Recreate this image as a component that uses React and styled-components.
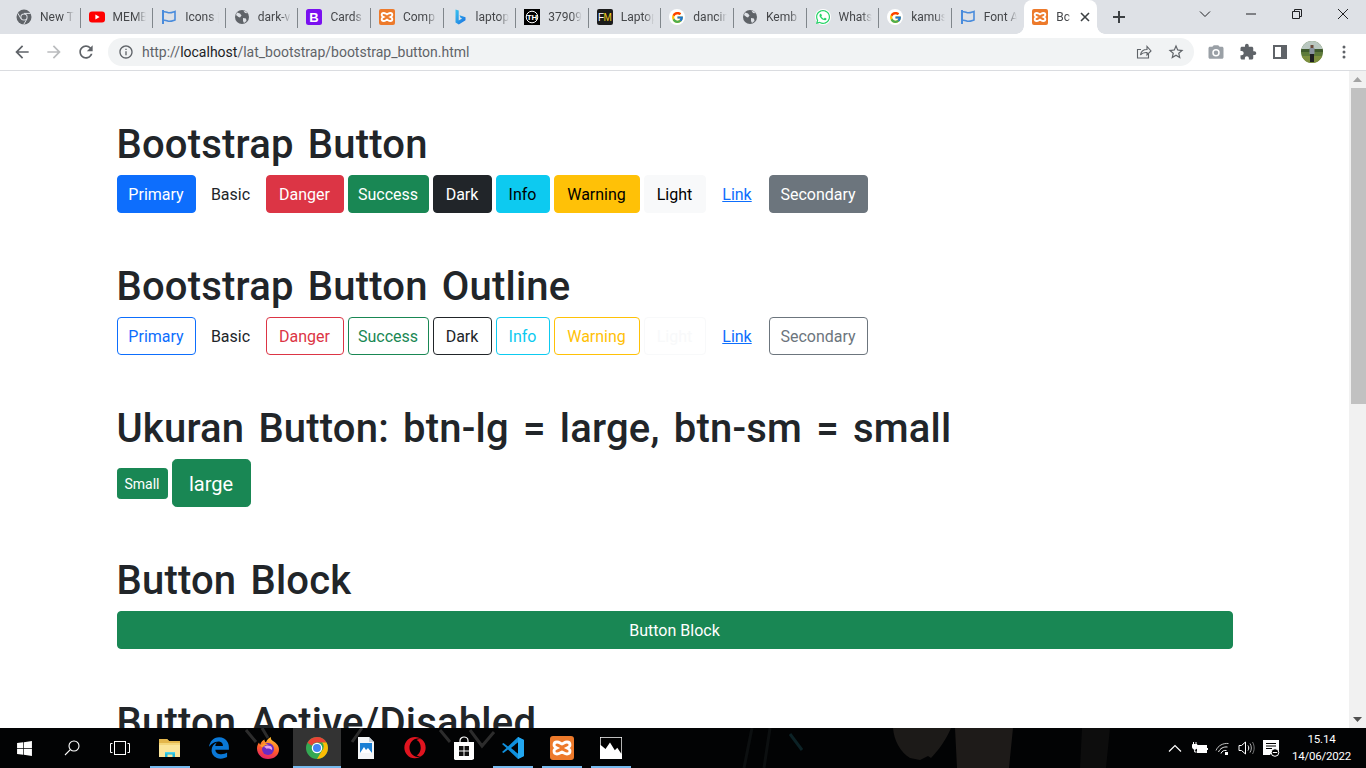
import React from 'react'
import styled, { createGlobalStyle, css } from 'styled-components'
import { FaWhatsapp, FaWindows, FaEdgeLegacy, FaOpera } from 'react-icons/fa'
import { FcGoogle } from 'react-icons/fc'

const Global = createGlobalStyle`
  html, body {
    margin: 0;
    height: 100%;
    overflow: hidden;
    background: #fff;
  }
  * { box-sizing: border-box; }
`

const UI_FONT = 'Roboto, "Noto Sans", sans-serif'

const Shell = styled.div`
  display: flex;
  flex-direction: column;
  height: 768px;
  font-family: ${UI_FONT};
`

/* ---------- tab strip ---------- */

const TabStrip = styled.div`
  display: flex;
  height: 34px;
  padding-left: 8px;
  background: #dee1e6;
  flex: none;
`

const Tab = styled.div`
  position: relative;
  display: flex;
  align-items: center;
  width: 72.6px;
  flex: none;
  padding: 0 7px 0 8px;
  gap: 8px;
  font-size: 12px;
  color: #45474a;

  ${p => p.$sep && css`
    &::after {
      content: '';
      position: absolute;
      right: 0;
      top: 8px;
      height: 20px;
      width: 1px;
      background: #80868b;
    }
  `}

  ${p => p.$active && css`
    width: 73px;
    background: #fff;
    border-radius: 8px 8px 0 0;
    &::before {
      content: '';
      position: absolute;
      left: -8px;
      bottom: 0;
      width: 8px;
      height: 8px;
      background: radial-gradient(circle at 0 0, transparent 7.5px, #fff 8px);
    }
    &::after {
      content: '';
      position: absolute;
      right: -8px;
      bottom: 0;
      width: 8px;
      height: 8px;
      background: radial-gradient(circle at 100% 0, transparent 7.5px, #fff 8px);
    }
  `}
`

const TabTitle = styled.span`
  flex: 1;
  min-width: 0;
  white-space: nowrap;
  -webkit-mask-image: linear-gradient(90deg, #000 70%, transparent);
  mask-image: linear-gradient(90deg, #000 70%, transparent);
`

const Fav = styled.span`
  display: flex;
  width: 16px;
  height: 16px;
  flex: none;
  align-items: center;
  justify-content: center;
`

const NewTab = styled.div`
  display: flex;
  width: 28px;
  height: 28px;
  margin: 3px 0 0 8px;
  align-items: center;
  justify-content: center;
`

const WinControls = styled.div`
  display: flex;
  margin-left: auto;
  height: 28px;
`

const WinBtn = styled.div`
  display: flex;
  width: 46px;
  align-items: center;
  justify-content: center;
`

/* ---------- toolbar ---------- */

const Toolbar = styled.div`
  display: flex;
  align-items: center;
  height: 37px;
  padding: 0 6px 1px;
  background: #fff;
  border-bottom: 1px solid #dadce0;
  flex: none;
`

const ToolBtn = styled.div`
  display: flex;
  width: 32px;
  height: 28px;
  flex: none;
  align-items: center;
  justify-content: center;
`

const Omnibox = styled.div`
  display: flex;
  align-items: center;
  flex: 1;
  height: 28px;
  margin: 0 6px;
  padding: 0 2px 0 8px;
  border-radius: 14px;
  background: #f1f3f4;
`

const InfoWrap = styled.span`
  display: flex;
  width: 20px;
  justify-content: center;
  margin-right: 6px;
`

const Url = styled.div`
  flex: 1;
  font-size: 14px;
  color: #5f6368;
  white-space: nowrap;
  b {
    font-weight: 400;
    color: #202124;
  }
`

/* ---------- page ---------- */

const Viewport = styled.div`
  display: flex;
  flex: 1;
  min-height: 0;
`

const Page = styled.main`
  flex: 1;
  min-width: 0;
  overflow: hidden;
  padding: 48px 116.5px 0;
  font-family: ${UI_FONT};
  color: #212529;
`

const Section = styled.section`
  margin-bottom: 48px;
`

const Heading = styled.h1`
  height: 48px;
  margin: 0 0 8px;
  font-size: 40px;
  line-height: 52px;
  font-weight: 500;
  letter-spacing: 0.2px;
  word-spacing: 4px;
  color: #212529;
  white-space: nowrap;
`

const Row = styled.div`
  display: flex;
  align-items: center;
  gap: 4px;
`

const colors = {
  primary: ['#0d6efd', '#fff'],
  danger: ['#dc3545', '#fff'],
  success: ['#198754', '#fff'],
  dark: ['#212529', '#fff'],
  info: ['#0dcaf0', '#000'],
  warning: ['#ffc107', '#000'],
  light: ['#f8f9fa', '#000'],
  secondary: ['#6c757d', '#fff'],
}

const sizes = {
  sm: css`height: 31px; font-size: 14px; border-radius: 3.2px;`,
  md: css`height: 38px; font-size: 16px; border-radius: 4px;`,
  lg: css`height: 48px; font-size: 20px; border-radius: 4.8px;`,
}

const Btn = styled.button`
  display: flex;
  align-items: center;
  justify-content: center;
  flex: none;
  width: ${p => (p.$block ? '100%' : `${p.$w}px`)};
  padding: 1px 0 0;
  font-family: inherit;
  border: 1px solid transparent;
  background: transparent;
  color: #212529;
  ${p => sizes[p.$size || 'md']}
  ${p => {
    const c = colors[p.$kind]
    if (!c) return ''
    return p.$outline
      ? css`border-color: ${c[0]}; color: ${c[0]};`
      : css`border-color: ${c[0]}; background: ${c[0]}; color: ${c[1]};`
  }}
  ${p => p.$link && css`color: #0d6efd; text-decoration: underline;`}
`

const BUTTONS = [
  { label: 'Primary', kind: 'primary', w: 79 },
  { label: 'Basic', w: 62 },
  { label: 'Danger', kind: 'danger', w: 78 },
  { label: 'Success', kind: 'success', w: 81 },
  { label: 'Dark', kind: 'dark', w: 59 },
  { label: 'Info', kind: 'info', w: 54 },
  { label: 'Warning', kind: 'warning', w: 86 },
  { label: 'Light', kind: 'light', w: 62 },
  { label: 'Link', link: true, w: 55 },
  { label: 'Secondary', kind: 'secondary', w: 99 },
]

function ButtonRow({ outline }) {
  return (
    <Row>
      {BUTTONS.map(b => (
        <Btn key={b.label} $kind={b.kind} $link={b.link} $w={b.w} $outline={outline}>
          {b.label}
        </Btn>
      ))}
    </Row>
  )
}

/* ---------- scrollbar ---------- */

const Scrollbar = styled.div`
  display: flex;
  flex-direction: column;
  align-items: flex-end;
  width: 17px;
  flex: none;
  background: #f1f1f1;
`

const ScrollArrow = styled.div`
  display: flex;
  width: 17px;
  height: 17px;
  flex: none;
  align-items: center;
  justify-content: center;
  margin-top: ${p => (p.$down ? 'auto' : 0)};
`

const ScrollThumb = styled.div`
  width: 15px;
  height: 316px;
  background: #c1c1c1;
`

/* ---------- taskbar ---------- */

const Taskbar = styled.footer`
  position: relative;
  display: flex;
  height: 40px;
  flex: none;
  overflow: hidden;
  background: #020304;
  color: #fff;
`

const Wallpaper = styled.svg`
  position: absolute;
  left: 0;
  top: 0;
  width: 100%;
  height: 100%;
`

const TaskGroup = styled.div`
  position: relative;
  display: flex;
  gap: ${p => p.$gap || 0}px;
  margin-left: ${p => p.$ml || 0}px;
`

const TaskBtn = styled.div`
  position: relative;
  display: flex;
  width: 48px;
  height: 40px;
  align-items: center;
  justify-content: center;
  background: ${p => (p.$focus ? '#333' : 'transparent')};

  ${p => p.$running && css`
    &::after {
      content: '';
      position: absolute;
      bottom: 0;
      left: ${p.$focus ? 0 : 4}px;
      right: ${p.$focus ? 0 : 4}px;
      height: 2px;
      background: #76b9ed;
    }
  `}
`

const Tray = styled.div`
  position: relative;
  display: flex;
  align-items: center;
  margin-left: auto;
  padding-right: 6px;
`

const TrayItem = styled.div`
  display: flex;
  width: 24px;
  height: 40px;
  align-items: center;
  justify-content: center;
`

const Clock = styled.div`
  width: 77px;
  text-align: center;
  font-size: 11.5px;
  letter-spacing: -0.2px;
  line-height: 17px;
  color: #fff;
`

/* ---------- icons ---------- */

const RoundBadge = styled.span`
  display: flex;
  width: 16px;
  height: 16px;
  align-items: center;
  justify-content: center;
  border-radius: 8px;
  background: #fff;
`

const Mat = ({ d, size = 16, color = '#5f6368' }) => (
  <svg width={size} height={size} viewBox="0 0 24 24" fill={color} fillRule="evenodd">
    <path d={d} />
  </svg>
)

const ChromeMono = () => (
  <svg width="16" height="16" viewBox="0 0 16 16">
    <circle cx="8" cy="8" r="7.5" fill="#5f6368" />
    <circle cx="8" cy="8" r="3.6" fill="#dee1e6" />
    <circle cx="8" cy="8" r="2.6" fill="#5f6368" />
    <path d="M8 4.4h6.6M5 9.8L1.8 4.2M11 9.8l-3.3 5.7" stroke="#dee1e6" strokeWidth="1" />
  </svg>
)

const Youtube = () => (
  <svg width="16" height="16" viewBox="0 0 16 16">
    <rect y="2.5" width="16" height="11" rx="3" fill="#f00" />
    <path d="M6.4 5.5v5L10.6 8z" fill="#fff" />
  </svg>
)

const FlagIcon = () => (
  <svg width="16" height="16" viewBox="0 0 16 16" fill="none" stroke="#4a8cdc" strokeWidth="2">
    <path d="M2 1v14" />
    <path d="M2 3c3-1 4 .8 6.5.8S12 3 14 2.4V11c-2 .6-3 1.3-5.5 1.3S5 10.5 2 11.5" strokeWidth="1.6" />
  </svg>
)

const Globe = () => (
  <svg width="16" height="16" viewBox="0 0 16 16">
    <circle cx="8" cy="8" r="7" fill="#5f6368" />
    <path d="M3 3.5l3 1 1.5 2L6 8.5l-1.5-.5L2 6zM9 9l3 .5.5 2.5-2.5 2-1-2zM9.5 1.8L11 4l2.5.3L12 2.5z" fill="#dee1e6" />
  </svg>
)

const BootstrapIcon = () => (
  <svg width="16" height="16" viewBox="0 0 16 16">
    <rect width="16" height="16" rx="2.5" fill="#7a10f0" />
    <text x="8" y="12.6" fontFamily="Liberation Sans, sans-serif" fontSize="13" fontWeight="700" textAnchor="middle" fill="#fff">B</text>
  </svg>
)

const Xampp = ({ size = 16 }) => (
  <svg width={size} height={size} viewBox="0 0 24 24">
    <rect width="24" height="24" rx="3" fill="#ed7a2b" />
    <path
      d="M7 6c2 0 3 1 5 2 2-1 3-2 5-2 2.5 0 3 2 3 3 0 2-2 2.5-3 3 1 .5 3 1 3 3 0 2-1.5 3-3 3-2 0-3-1-5-2-2 1-3 2-5 2-2 0-3-1.5-3-3 0-2 2-2.5 3-3-1-.5-3-1-3-3 0-1.5 1-3 3-3z"
      fill="none"
      stroke="#fff"
      strokeWidth="2.8"
    />
  </svg>
)

const BingIcon = () => (
  <svg width="16" height="16" viewBox="0 0 16 16">
    <defs>
      <linearGradient id="bing" x1="0" y1="0" x2="1" y2="1">
        <stop offset="0" stopColor="#38c4f0" />
        <stop offset="1" stopColor="#1a6fe0" />
      </linearGradient>
    </defs>
    <path d="M3.5 0.5l3.2 1.1v10l3.4-2-1.6-.8-1-2.6 6 2.1v3L6.8 15.5 3.5 13.6z" fill="url(#bing)" />
  </svg>
)

const THIcon = () => (
  <svg width="16" height="16" viewBox="0 0 16 16">
    <rect width="16" height="16" fill="#000" />
    <circle cx="8" cy="8" r="5.8" fill="none" stroke="#fff" strokeWidth="1" />
    <text x="8" y="11" fontFamily="Liberation Sans, sans-serif" fontSize="8" fontWeight="700" textAnchor="middle" fill="#fff">TH</text>
  </svg>
)

const FMIcon = () => (
  <svg width="16" height="16" viewBox="0 0 16 16">
    <rect width="16" height="16" rx="2" fill="#1c1c1c" />
    <text x="1" y="12" fontFamily="Liberation Sans, sans-serif" fontSize="10" fill="#fff">F</text>
    <text x="6.6" y="12" fontFamily="Liberation Sans, sans-serif" fontSize="10" fill="#f5d020">M</text>
  </svg>
)

const GoogleIcon = () => (
  <RoundBadge><FcGoogle size={13} /></RoundBadge>
)

const WhatsappIcon = () => (
  <RoundBadge><FaWhatsapp size={16} color="#25d366" /></RoundBadge>
)

const favicons = {
  chrome: <ChromeMono />,
  youtube: <Youtube />,
  flag: <FlagIcon />,
  globe: <Globe />,
  bootstrap: <BootstrapIcon />,
  xampp: <Xampp />,
  bing: <BingIcon />,
  th: <THIcon />,
  fm: <FMIcon />,
  google: <GoogleIcon />,
  whatsapp: <WhatsappIcon />,
}

const TABS = [
  ['chrome', 'New T'],
  ['youtube', 'MEMB'],
  ['flag', 'Icons |'],
  ['globe', 'dark-v'],
  ['bootstrap', 'Cards'],
  ['xampp', 'Comp'],
  ['bing', 'laptop'],
  ['th', '37909'],
  ['fm', 'Laptop'],
  ['google', 'dancin'],
  ['globe', 'Kemb'],
  ['whatsapp', 'Whats'],
  ['google', 'kamus'],
  ['flag', 'Font A'],
]

const WinGlyph = ({ children }) => (
  <svg width="12" height="12" viewBox="0 0 12 12" fill="none" stroke="#202124" strokeWidth="1">
    {children}
  </svg>
)

const ExplorerIcon = () => (
  <svg width="24" height="24" viewBox="0 0 24 24">
    <path d="M1 3h8l2 2h11v16H1z" fill="#f3d67a" />
    <path d="M1 3h8l2 2h11v2H1z" fill="#e3b64c" />
    <path d="M1 9h21v12H1z" fill="#fbe59a" />
    <path d="M7 21v-5h10v5h-2.5v-2.5h-5V21z" fill="#1fb6d6" />
    <path d="M7 16h10v1.5H7z" fill="#4dd3ea" />
  </svg>
)

const FirefoxIcon = () => (
  <svg width="24" height="24" viewBox="0 0 24 24">
    <defs>
      <linearGradient id="ffx" x1="0.6" y1="0" x2="0.3" y2="1">
        <stop offset="0" stopColor="#ffc12c" />
        <stop offset="0.55" stopColor="#ff5a2b" />
        <stop offset="1" stopColor="#e21d6f" />
      </linearGradient>
    </defs>
    <path d="M12 23C5.5 23 1 18 1 12.5c0-2.5.8-4.5 2-6 .2 1 .7 1.7 1.2 2.2C5 6 7 4 8.5 3.5 8.3 5 9 6 10 6.2 11 3.5 13.5 1.5 15 1c-.5 2 .5 3 2 4 3 2 6 4.5 6 8.5C23 19 18.5 23 12 23z" fill="url(#ffx)" />
    <circle cx="12" cy="13" r="6" fill="#6a2bc4" />
    <path d="M7.5 11c2-1.5 4.5-2 7-1 1.5.8 2 2.5 1.5 4-1.5-1.5-4-2-5.5-1.2-.8-1.2-2-1.8-3-1.8z" fill="#e9a3e8" />
    <path d="M4 9c2 0 3-1 4.5-2 1 1 3 1 4.500 1.500-2.500.2-5 1-6.500 3C5.500 11 4.500 10 4 9z" fill="#ff9a2b" />
  </svg>
)

const ChromeIcon = () => (
  <svg width="24" height="24" viewBox="0 0 48 48">
    <circle cx="24" cy="24" r="22" fill="#34a853" />
    <path d="M24 2a22 22 0 0 1 19 11H24a11 11 0 0 0-10 6.5L5 13.5A22 22 0 0 1 24 2z" fill="#ea4335" />
    <path d="M43 13a22 22 0 0 1-19 33l10-17a11 11 0 0 0 0-16z" fill="#fbbc04" />
    <circle cx="24" cy="24" r="10.5" fill="#fff" />
    <circle cx="24" cy="24" r="8" fill="#4285f4" />
  </svg>
)

const ImageDocIcon = () => (
  <svg width="24" height="24" viewBox="0 0 24 24">
    <path d="M4 1h11l5 5v17H4z" fill="#f4f6f8" />
    <path d="M15 1l5 5h-5z" fill="#c8d0d8" />
    <path d="M6 7h12v10H6z" fill="#1a7fd4" />
    <path d="M6 17l4-6 2 3 2-2 4 5z" fill="#fff" />
  </svg>
)

const StoreIcon = () => (
  <svg width="24" height="24" viewBox="0 0 24 24">
    <path d="M8 6V4.5C8 2.5 10 1 12 1s4 1.5 4 3.5V6" fill="none" stroke="#fff" strokeWidth="1.2" />
    <path d="M2 6h20v17l-2 1H3l-1-1z" fill="#fff" />
    <path d="M7 10h4.500v4.500H7zM12.500 10H17v4.500h-4.500zM7 15.500h4.500V20H7zM12.500 15.500H17V20h-4.500z" fill="#111" />
  </svg>
)

const VscodeIcon = () => (
  <svg width="24" height="24" viewBox="0 0 24 24">
    <path d="M17 1l6 3v16l-6 3-10-9.5L2.5 17 1 16l4.5-4L1 8l1.5-1L7 10.5z" fill="#0f8fdc" />
    <path d="M17 6.5L10 12l7 5.5z" fill="#020304" />
    <path d="M17 1l6 3v16l-6 3z" fill="#22a7f0" />
    <path d="M17 6.5v11l-3-2.4V8.9z" fill="#020304" />
  </svg>
)

const PhotosIcon = () => (
  <svg width="22" height="22" viewBox="0 0 22 22">
    <rect width="22" height="22" fill="#fff" />
    <path d="M.7.7h20.600v16l-4-6-2.500 2.500L10 5.500 5.500 12 .7 8z" fill="#000" />
  </svg>
)

const BatteryIcon = () => (
  <svg width="17" height="12" viewBox="0 0 17 12" fill="none" stroke="#fff">
    <path d="M2.5 0v2.5M5 0v2.5M1.5 2.5H6V5a2 2 0 0 1-4.5 0z" fill="#fff" />
    <path d="M3.7 7v3h2" />
    <rect x="6.5" y="3.5" width="9" height="7" fill="#fff" />
    <path d="M16.5 6v2" />
  </svg>
)

const WifiIcon = () => (
  <svg width="16" height="16" viewBox="0 0 16 16" fill="none" stroke="#fff" strokeWidth="1">
    <path d="M1 10.5C3 5.5 8 3 13.5 3.5" opacity=".75" />
    <path d="M3.5 12C5 8.5 8.5 6.5 12.5 7" opacity=".9" />
    <path d="M6 13.5C7 11 9 10 11.5 10.5" />
    <rect x="10" y="12" width="3" height="3" fill="#fff" stroke="none" />
  </svg>
)

const VolumeIcon = () => (
  <svg width="18" height="16" viewBox="0 0 18 16" fill="none" stroke="#fff" strokeWidth="1">
    <path d="M1 5.5h2.500L7.500 2v12l-4-3.500H1z" />
    <path d="M10 5.5c1 1.500 1 3.500 0 5" />
    <path d="M12 3.5c1.800 2.800 1.800 6.200 0 9" opacity=".7" />
    <path d="M14.5 2c2.200 3.800 2.200 8.200 0 12" opacity=".45" />
  </svg>
)

const NotifyIcon = () => (
  <svg width="17" height="17" viewBox="0 0 17 17">
    <path d="M0 0h16v12h-5a5 5 0 0 0-4 3H0z" fill="#fff" />
    <path d="M3 3.5h10M3 6h10M3 8.5h6" stroke="#000" strokeWidth="1" />
    <circle cx="12" cy="12.5" r="3.8" fill="#000" stroke="#fff" strokeWidth="1" />
    <path d="M9.8 12.5h4.4" stroke="#fff" strokeWidth="1" />
  </svg>
)

const PATHS = {
  back: 'M20 11H7.83l5.59-5.59L12 4l-8 8 8 8 1.41-1.41L7.83 13H20v-2z',
  forward: 'M12 4l-1.41 1.41L16.17 11H4v2h12.17l-5.58 5.59L12 20l8-8z',
  reload: 'M17.65 6.35C16.2 4.9 14.21 4 12 4c-4.42 0-7.99 3.58-7.99 8s3.57 8 7.99 8c3.73 0 6.84-2.55 7.73-6h-2.08c-.82 2.33-3.04 4-5.65 4-3.31 0-6-2.69-6-6s2.69-6 6-6c1.66 0 3.14.69 4.22 1.78L13 11h7V4l-2.35 2.35z',
  info: 'M11 7h2v2h-2zm0 4h2v6h-2zm1-9C6.48 2 2 6.48 2 12s4.48 10 10 10 10-4.48 10-10S17.52 2 12 2zm0 18c-4.41 0-8-3.59-8-8s3.59-8 8-8 8 3.59 8 8-3.59 8-8 8z',
  star: 'M22 9.24l-7.19-.62L12 2 9.19 8.63 2 9.24l5.46 4.73L5.82 21 12 17.27 18.18 21l-1.63-7.03L22 9.24zM12 15.4l-3.76 2.27 1-4.28-3.32-2.88 4.38-.38L12 6.1l1.71 4.04 4.38.38-3.32 2.88 1 4.28L12 15.4z',
  camera: 'M9 3L7.17 5H4c-1.1 0-2 .9-2 2v12c0 1.1.9 2 2 2h16c1.1 0 2-.9 2-2V7c0-1.1-.9-2-2-2h-3.17L15 3H9zm3 15a5 5 0 1 1 0-10 5 5 0 0 1 0 10zm0-2a3 3 0 1 0 0-6 3 3 0 0 0 0 6z',
  puzzle: 'M20.5 11H19V7c0-1.1-.9-2-2-2h-4V3.5C13 2.12 11.88 1 10.5 1S8 2.12 8 3.5V5H4c-1.1 0-1.99.9-1.99 2v3.8H3.5c1.49 0 2.7 1.21 2.7 2.7s-1.21 2.7-2.7 2.7H2V20c0 1.1.9 2 2 2h3.8v-1.5c0-1.49 1.21-2.7 2.7-2.7 1.49 0 2.7 1.21 2.7 2.7V22H17c1.1 0 2-.9 2-2v-4h1.5c1.38 0 2.5-1.12 2.5-2.5S21.88 11 20.5 11z',
}

export default function App() {
  return (
    <Shell>
      <Global />
      <TabStrip>
        {TABS.map(([icon, title], i) => (
          <Tab key={i} $sep={i < TABS.length - 1}>
            <Fav>{favicons[icon]}</Fav>
            <TabTitle>{title}</TabTitle>
          </Tab>
        ))}
        <Tab $active>
          <Fav><Xampp /></Fav>
          <TabTitle>Bc</TabTitle>
          <svg width="10" height="10" viewBox="0 0 10 10" stroke="#3c4043" strokeWidth="1.6">
            <path d="M1 1l8 8M9 1L1 9" />
          </svg>
        </Tab>
        <NewTab>
          <svg width="12" height="12" viewBox="0 0 12 12" stroke="#3c4043" strokeWidth="2">
            <path d="M6 0v12M0 6h12" />
          </svg>
        </NewTab>
        <WinControls>
          <WinBtn>
            <WinGlyph><path d="M1 3.5l5 5 5-5" /></WinGlyph>
          </WinBtn>
          <WinBtn>
            <WinGlyph><path d="M1 6h10" /></WinGlyph>
          </WinBtn>
          <WinBtn>
            <WinGlyph>
              <path d="M1.5 3.5h7v7h-7z" />
              <path d="M3.5 3.5v-2h7v7h-2" />
            </WinGlyph>
          </WinBtn>
          <WinBtn>
            <WinGlyph><path d="M1 1l10 10M11 1L1 11" /></WinGlyph>
          </WinBtn>
        </WinControls>
      </TabStrip>

      <Toolbar>
        <ToolBtn><Mat d={PATHS.back} size={20} /></ToolBtn>
        <ToolBtn><Mat d={PATHS.forward} size={20} color="#babcbe" /></ToolBtn>
        <ToolBtn><Mat d={PATHS.reload} size={20} /></ToolBtn>
        <Omnibox>
          <InfoWrap><Mat d={PATHS.info} /></InfoWrap>
          <Url>http://<b>localhost</b>/lat_bootstrap/bootstrap_button.html</Url>
          <ToolBtn>
            <svg width="16" height="16" viewBox="0 0 16 16" fill="none" stroke="#5f6368" strokeWidth="1.1">
              <path d="M12.5 10v4H1.5V5.5H5" />
              <path d="M4.5 11c.5-3.5 3-5.5 6.5-5.5v-3l4 4.500-4 4V8.500c-2.500-.2-5 .5-6.500 2.500z" />
            </svg>
          </ToolBtn>
          <ToolBtn><Mat d={PATHS.star} size={18} /></ToolBtn>
        </Omnibox>
        <ToolBtn><Mat d={PATHS.camera} size={18} color="#9aa0a6" /></ToolBtn>
        <ToolBtn><Mat d={PATHS.puzzle} size={18} /></ToolBtn>
        <ToolBtn>
          <svg width="14" height="14" viewBox="0 0 14 14">
            <path d="M0 0h14v14H0zM2 2v10h6V2z" fill="#5f6368" fillRule="evenodd" />
          </svg>
        </ToolBtn>
        <ToolBtn>
          <svg width="22" height="22" viewBox="0 0 22 22">
            <clipPath id="avatar"><circle cx="11" cy="11" r="11" /></clipPath>
            <g clipPath="url(#avatar)">
              <rect width="22" height="22" fill="#5d7a3a" />
              <rect width="22" height="8" fill="#b9c7c0" />
              <rect y="8" width="22" height="3" fill="#3f5a2c" />
              <rect y="15" width="22" height="7" fill="#7d8f3e" />
              <rect x="9.5" y="4" width="3" height="3" fill="#6b4a3a" />
              <rect x="8.5" y="7" width="5" height="6" fill="#8a93a0" />
              <rect x="9" y="13" width="4" height="8" fill="#1e1e22" />
            </g>
          </svg>
        </ToolBtn>
        <ToolBtn>
          <svg width="4" height="14" viewBox="0 0 4 14" fill="#5f6368">
            <circle cx="2" cy="2" r="1.5" />
            <circle cx="2" cy="7" r="1.5" />
            <circle cx="2" cy="12" r="1.5" />
          </svg>
        </ToolBtn>
      </Toolbar>

      <Viewport>
        <Page>
          <Section>
            <Heading>Bootstrap Button</Heading>
            <ButtonRow />
          </Section>
          <Section>
            <Heading>Bootstrap Button Outline</Heading>
            <ButtonRow outline />
          </Section>
          <Section>
            <Heading>Ukuran Button: btn-lg = large, btn-sm = small</Heading>
            <Row>
              <Btn $kind="success" $size="sm" $w={51}>Small</Btn>
              <Btn $kind="success" $size="lg" $w={79}>large</Btn>
            </Row>
          </Section>
          <Section>
            <Heading>Button Block</Heading>
            <Btn $kind="success" $block>Button Block</Btn>
          </Section>
          <Section>
            <Heading>Button Active/Disabled</Heading>
          </Section>
        </Page>
        <Scrollbar>
          <ScrollArrow>
            <svg width="9" height="5" viewBox="0 0 9 5"><path d="M4.5 0L9 5H0z" fill="#a3a3a3" /></svg>
          </ScrollArrow>
          <ScrollThumb />
          <ScrollArrow $down>
            <svg width="9" height="5" viewBox="0 0 9 5"><path d="M0 0h9L4.5 5z" fill="#505050" /></svg>
          </ScrollArrow>
        </Scrollbar>
      </Viewport>

      <Taskbar>
        <Wallpaper viewBox="0 0 1366 40" preserveAspectRatio="none" fill="none" strokeWidth="3">
          <path d="M246 2l10 12M262 0l6 10M300 2l14 12M322 0c2 6-2 12-8 16M440 2l10 12M470 2l12 16 12-14M362 0l-10 14" stroke="#2c2c2c" />
          <path d="M790 6l12 16" stroke="#0c2226" />
          <path d="M752 0l-8 40M770 0l-6 40" stroke="#0c0f10" />
          <path d="M893 0h58c-4 10-12 22-20 30l-3-2-8 4-10-2C900 24 894 12 893 0z" fill="#1c1a18" />
          <path d="M955 0h58l-4 40h-52z" fill="#1e1b19" />
          <path d="M1082 0h28l-4 40h-26z" fill="#0d0d0d" />
        </Wallpaper>
        <TaskGroup>
          <TaskBtn><FaWindows size={17} color="#fff" /></TaskBtn>
          <TaskBtn>
            <svg width="16" height="16" viewBox="0 0 16 16" fill="none" stroke="#fff" strokeWidth="1.1">
              <circle cx="10" cy="6" r="5" />
              <path d="M6.3 9.7L1 15" />
            </svg>
          </TaskBtn>
          <TaskBtn>
            <svg width="20" height="14" viewBox="0 0 20 14" fill="none" stroke="#fff" strokeWidth="1">
              <rect x="4.5" y=".5" width="11" height="13" />
              <path d="M2.5 2.5H.5v9h2M17.5 2.5h2v9h-2" />
            </svg>
          </TaskBtn>
        </TaskGroup>
        <TaskGroup $gap={1} $ml={2}>
          <TaskBtn $running><ExplorerIcon /></TaskBtn>
          <TaskBtn><FaEdgeLegacy size={22} color="#0a78d7" /></TaskBtn>
          <TaskBtn><FirefoxIcon /></TaskBtn>
          <TaskBtn $running $focus><ChromeIcon /></TaskBtn>
          <TaskBtn><ImageDocIcon /></TaskBtn>
          <TaskBtn><FaOpera size={22} color="#e0141f" /></TaskBtn>
          <TaskBtn><StoreIcon /></TaskBtn>
          <TaskBtn $running><VscodeIcon /></TaskBtn>
          <TaskBtn $running><Xampp size={24} /></TaskBtn>
          <TaskBtn $running><PhotosIcon /></TaskBtn>
        </TaskGroup>
        <Tray>
          <TrayItem>
            <svg width="14" height="8" viewBox="0 0 14 8" fill="none" stroke="#fff" strokeWidth="1.2">
              <path d="M1 7.5l6-6 6 6" />
            </svg>
          </TrayItem>
          <TrayItem><BatteryIcon /></TrayItem>
          <TrayItem><WifiIcon /></TrayItem>
          <TrayItem><VolumeIcon /></TrayItem>
          <TrayItem><NotifyIcon /></TrayItem>
          <Clock>
            <div>15.14</div>
            <div>14/06/2022</div>
          </Clock>
        </Tray>
      </Taskbar>
    </Shell>
  )
}
